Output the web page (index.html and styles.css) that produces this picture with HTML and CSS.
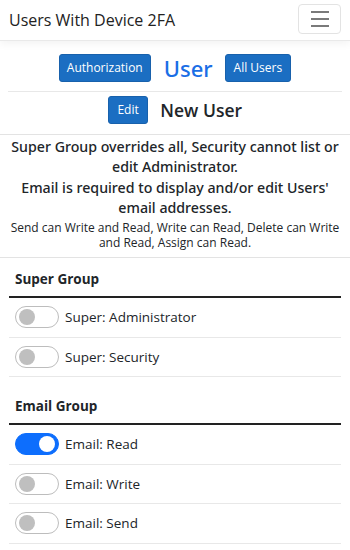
FILE: index.html
```html
<!DOCTYPE html>
<html lang="en">
  <head>
    <meta charset="UTF-8" />
    <meta name="viewport" content="width=device-width, initial-scale=1.0" />
    <title>User | Users With Device 2FA</title>
    <link rel="stylesheet" href="styles.css">
  </head>
  <body>
    <nav class="navbar">
      <span class="brand">Users With Device 2FA</span>
      <button class="toggler" aria-label="Toggle navigation">
        <span class="bar"></span>
        <span class="bar"></span>
        <span class="bar"></span>
      </button>
    </nav>

    <div class="head-row">
      <button class="btn btn-auth">Authorization</button>
      <h3 class="page-title">User</h3>
      <button class="btn">All Users</button>
    </div>
    <hr class="divider" />
    <div class="head-row edit-row">
      <button class="btn btn-edit">Edit</button>
      <h4 class="user-name">New User</h4>
    </div>

    <div class="notes">
      <p class="note">Super Group overrides all, Security cannot list or edit Administrator.</p>
      <p class="note">Email is required to display and/or edit Users' email addresses.</p>
      <p class="note small">Send can Write and Read, Write can Read, Delete can Write and Read, Assign can Read.</p>
    </div>

    <div class="group">
      <h6 class="group-title">Super Group</h6>
      <ul class="perm-list">
        <li class="perm"><span class="switch"></span>Super: Administrator</li>
        <li class="perm"><span class="switch"></span>Super: Security</li>
      </ul>
    </div>

    <div class="group">
      <h6 class="group-title">Email Group</h6>
      <ul class="perm-list">
        <li class="perm"><span class="switch on"></span>Email: Read</li>
        <li class="perm"><span class="switch"></span>Email: Write</li>
        <li class="perm"><span class="switch"></span>Email: Send</li>
      </ul>
    </div>
  </body>
</html>
```

FILE: styles.css
```css
* {
  margin: 0;
  padding: 0;
  box-sizing: border-box;
}
body {
  font-family: "Open Sans", "Noto Sans", sans-serif;
  color: #212529;
  background: #fff;
  overflow: hidden;
}

.navbar {
  height: 41px;
  display: flex;
  align-items: center;
  justify-content: space-between;
  padding: 0 9px;
  border-bottom: 1px solid #e9e9e9;
  box-shadow: 0 3px 8px rgba(0, 0, 0, 0.05);
}
.brand {
  font-size: 16px;
  color: #222;
}
.toggler {
  width: 43px;
  height: 30px;
  background: #fff;
  border: 1px solid #e3e3e3;
  border-radius: 4px;
  display: flex;
  flex-direction: column;
  align-items: center;
  justify-content: center;
  gap: 5px;
  margin-top: -2px;
}
.bar {
  display: block;
  width: 18px;
  height: 2px;
  background: #7a7a7a;
}

.head-row {
  display: flex;
  justify-content: center;
  align-items: center;
  margin-top: 13px;
}
.btn {
  font-family: inherit;
  font-size: 12px;
  line-height: 18px;
  padding: 4px 8px;
  color: #fff;
  background-color: #1b6ec2;
  border: 1px solid #1861ac;
  border-radius: 3px;
}
.btn-auth {
  padding: 4px 7px;
}
.btn-edit {
  padding: 4px 8.5px;
}
.page-title {
  font-family: "Noto Sans", sans-serif;
  font-size: 22px;
  font-weight: 500;
  color: #1a6ee6;
  margin: 0 12px 0 13px;
  line-height: 28px;
}
.divider {
  border: none;
  border-top: 1px solid #e8e8e8;
  margin: 9px 8px 0;
}
.edit-row {
  margin-top: 4px;
  padding-bottom: 10px;
  border-bottom: 1px solid #e3e3e3;
}
.user-name {
  font-size: 17.5px;
  font-weight: 600;
  margin-left: 12px;
  line-height: 26px;
}

.notes {
  text-align: center;
  padding: 2px 6px 5px;
  border-bottom: 1px solid #e3e3e3;
}
.note {
  font-family: "Noto Sans", sans-serif;
  font-size: 14.2px;
  font-weight: 500;
  line-height: 19.5px;
  margin-bottom: 2px;
}
.note.small {
  font-family: "Open Sans", sans-serif;
  font-size: 12px;
  font-weight: 400;
  line-height: 14.5px;
  margin-top: 4px;
}

.group {
  padding: 0 9px;
  margin-bottom: 8px;
}
.group-title {
  font-size: 13.5px;
  font-weight: 700;
  line-height: 20px;
  padding: 11px 6px 7px;
  border-bottom: 2px solid #222;
}
.perm-list {
  list-style: none;
}
.perm {
  height: 39.5px;
  display: flex;
  align-items: center;
  padding: 0 6px;
  font-size: 13.5px;
  border-bottom: 1px solid #e8e8e8;
}
.switch {
  position: relative;
  width: 44px;
  height: 22px;
  border: 1px solid #bdbdbd;
  border-radius: 11px;
  margin-right: 6px;
  flex-shrink: 0;
}
.switch::after {
  content: "";
  position: absolute;
  top: 2px;
  left: 3px;
  width: 16px;
  height: 16px;
  border-radius: 50%;
  background: #bfbfbf;
}
.switch.on {
  background: #0d6efd;
  border-color: #0d6efd;
}
.switch.on::after {
  left: auto;
  right: 3px;
  background: #fff;
}
```
